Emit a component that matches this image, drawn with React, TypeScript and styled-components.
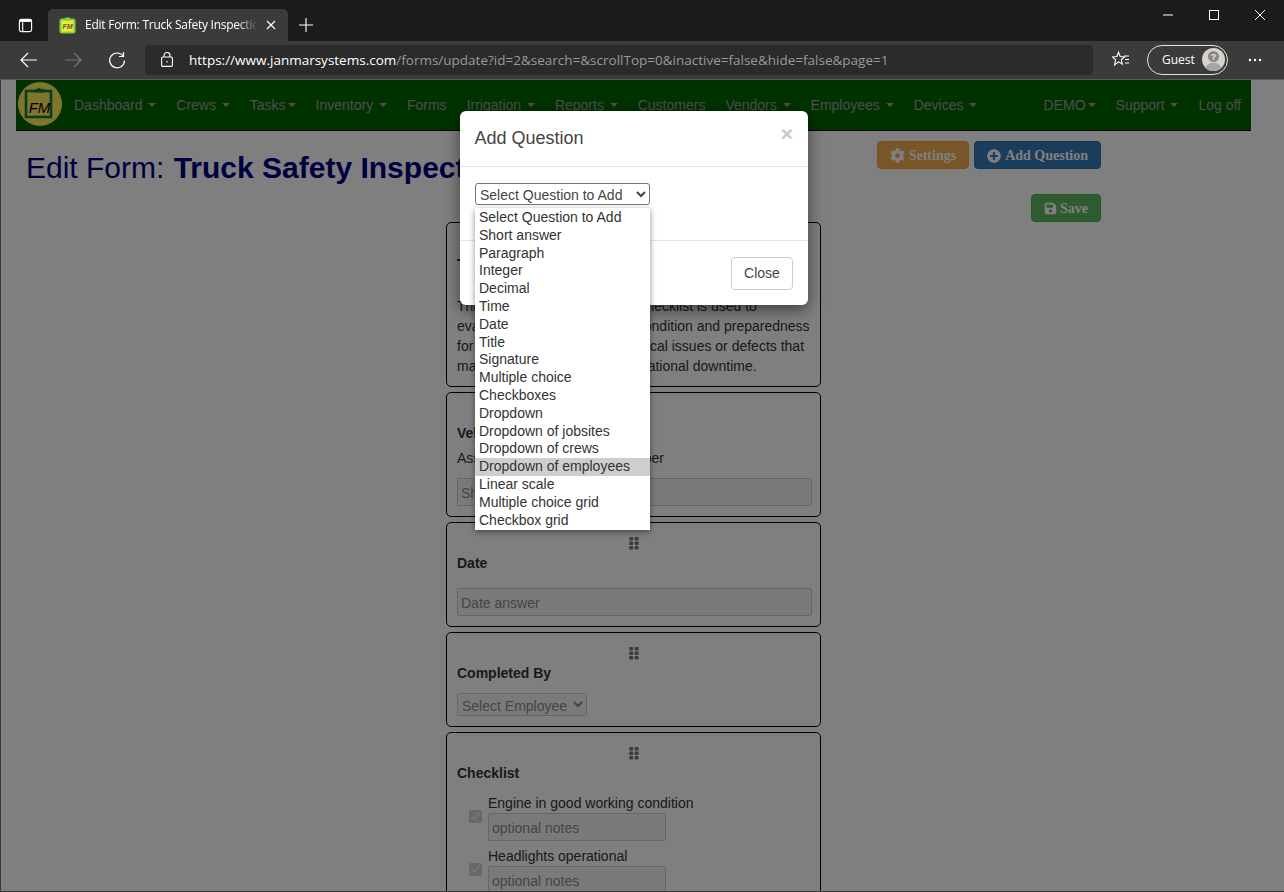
import { styled, createGlobalStyle } from 'styled-components';
import { FaCog, FaPlusCircle, FaSave } from 'react-icons/fa';

const GlobalStyle = createGlobalStyle`
  html, body {
    margin: 0;
    padding: 0;
    background: #fff;
    overflow: hidden;
  }
  * {
    box-sizing: border-box;
  }
`;

const Frame = styled.div`
  width: 1284px;
  height: 892px;
  display: flex;
  flex-direction: column;
  overflow: hidden;
  font-family: 'Liberation Sans', Arial, sans-serif;
  font-size: 14px;
  line-height: 20px;
  color: #333;
`;

/* ---------- browser chrome ---------- */

const TabStrip = styled.div`
  height: 41px;
  flex: none;
  display: flex;
  align-items: flex-end;
  background: #1b1b1b;
  color: #fff;
  font-family: 'Open Sans', 'Noto Sans', sans-serif;
`;

const StripButton = styled.div`
  width: 48px;
  height: 32px;
  padding-left: 2px;
  display: flex;
  align-items: center;
  justify-content: center;
`;

const Tab = styled.div`
  width: 240px;
  height: 32px;
  display: flex;
  align-items: center;
  padding: 0 12px 0 11px;
  background: #3b3b3b;
  border-radius: 5px 5px 0 0;
`;

const TabTitle = styled.span`
  flex: 1;
  margin: 0 8px 0 9px;
  font-size: 12px;
  letter-spacing: -0.25px;
  white-space: nowrap;
  overflow: hidden;
  -webkit-mask-image: linear-gradient(to right, #000 88%, transparent 100%);
  mask-image: linear-gradient(to right, #000 88%, transparent 100%);
`;

const NewTab = styled.div`
  width: 36px;
  height: 32px;
  display: flex;
  align-items: center;
  justify-content: center;
`;

const WindowControls = styled.div`
  margin: 0 1px 0 auto;
  align-self: flex-start;
  display: flex;
`;

const WindowButton = styled.div`
  width: 46px;
  height: 30px;
  display: flex;
  align-items: center;
  justify-content: center;
`;

const Toolbar = styled.div`
  height: 39px;
  flex: none;
  display: flex;
  align-items: center;
  padding: 0 7px 1px 7px;
  background: #3b3b3b;
  border-bottom: 1px solid #5a5a5a;
  color: #fff;
  font-family: 'Open Sans', 'Noto Sans', sans-serif;
`;

const ToolButton = styled.div`
  width: 44px;
  height: 30px;
  flex: none;
  display: flex;
  align-items: center;
  justify-content: center;
`;

const FavoritesButton = styled(ToolButton)`
  margin-left: 6px;
`;

const AddressBar = styled.div`
  width: 948px;
  height: 30px;
  flex: none;
  margin-left: 6px;
  display: flex;
  align-items: center;
  padding-left: 16px;
  background: #2b2b2b;
  border-radius: 4px;
  font-size: 13.5px;
  white-space: nowrap;
  color: #9a9a9a;
`;

const UrlStrong = styled.span`
  color: #fff;
`;

const UrlText = styled.span`
  margin-left: 16px;
`;

const GuestPill = styled.div`
  width: 81px;
  height: 30px;
  flex: none;
  margin-left: 4px;
  display: flex;
  align-items: center;
  justify-content: space-between;
  padding: 0 2px 0 14px;
  border: 1px solid #e4e4e4;
  border-radius: 15px;
  font-size: 12px;
`;

const MoreButton = styled(ToolButton)`
  width: 54px;
`;

/* ---------- page ---------- */

const Viewport = styled.div`
  flex: 1;
  min-height: 0;
  position: relative;
  overflow: hidden;
  border-left: 1px solid #3a3a3a;
  border-bottom: 1px solid #3a3a3a;
`;

const Page = styled.div`
  padding: 0 33px 0 15px;
`;

const Navbar = styled.nav`
  height: 51px;
  display: flex;
  background: #006400;
  border-bottom: 1px solid #000;
`;

const Logo = styled.div`
  width: 44px;
  height: 44px;
  margin: 2px 2px 0 2px;
  flex: none;
`;

const NavGroup = styled.div`
  display: flex;
`;

const RightGroup = styled(NavGroup)`
  margin-left: auto;
`;

const NavLink = styled.a`
  height: 50px;
  padding: 0 10px;
  display: flex;
  align-items: center;
  color: #9d9d9d;
  white-space: nowrap;
`;

const Caret = styled.span<{ $tight?: boolean }>`
  width: 0;
  height: 0;
  margin-left: ${({ $tight }) => ($tight ? '2px' : '5.8px')};
  border-top: 4px solid #9d9d9d;
  border-left: 4px solid transparent;
  border-right: 4px solid transparent;
`;

const Header = styled.div`
  display: flex;
  justify-content: space-between;
  padding: 10px 150px 0 10px;
`;

const Title = styled.h1`
  margin: 10px 0 0;
  font-size: 30px;
  font-weight: 400;
  line-height: 33px;
  color: #000080;
  white-space: nowrap;
`;

const FormName = styled.b`
  margin-left: 1px;
`;

const Actions = styled.div`
  display: flex;
  flex-direction: column;
  align-items: flex-end;
  gap: 25px;
`;

const ButtonRow = styled.div`
  display: flex;
  gap: 5px;
`;

const ActionButton = styled.button<{ $bg: string; $border: string }>`
  height: 28px;
  padding: 1px 12px 0;
  display: flex;
  align-items: center;
  gap: 4px;
  background: ${({ $bg }) => $bg};
  border: 1px solid ${({ $border }) => $border};
  border-radius: 4px;
  color: #fff;
  font-family: 'Liberation Serif', 'Times New Roman', serif;
  font-size: 14px;
  font-weight: 700;
`;

const SaveButton = styled(ActionButton)`
  gap: 3px;
`;

const CardList = styled.div`
  width: 375px;
  margin-left: 430px;
  display: flex;
  flex-direction: column;
  gap: 5px;
`;

const Card = styled.section`
  padding: 10px;
  border: 1px solid #000;
  border-radius: 5px;
`;

const Grip = styled.div`
  height: 20px;
  display: flex;
  align-items: center;
  justify-content: center;
  color: #777;
`;

const CardHeading = styled.div`
  margin-bottom: 17px;
  font-size: 18px;
  font-weight: 700;
  line-height: 26px;
`;

const Question = styled.div`
  font-weight: 700;
`;

const Hint = styled.div`
  margin-top: 5px;
`;

const Answer = styled.input<{ $top?: number }>`
  display: block;
  width: calc(100% + 2px);
  height: 28px;
  margin-top: ${({ $top }) => $top ?? 10}px;
  padding: 2px 3px 0;
  background: #f4f4f4;
  border: 1px solid #ccc;
  border-radius: 2px;
  font: inherit;
  &::placeholder {
    color: #8a8a8a;
    opacity: 1;
  }
`;

const EmployeeSelect = styled.select`
  display: block;
  width: 130px;
  height: 23px;
  margin-top: 10px;
  padding-top: 2px;
  background: #f4f4f4;
  border: 1px solid #ccc;
  border-radius: 2px;
  color: #8a8a8a;
  font: inherit;
  opacity: 1;
`;

const CheckList = styled.div`
  margin-top: 10px;
  display: flex;
  flex-direction: column;
  gap: 5px;
`;

const CheckItem = styled.div`
  display: flex;
  align-items: center;
  gap: 6px;
  padding-left: 12px;
`;

const CheckBox = styled.input`
  width: 13px;
  height: 13px;
  margin: 0 0 1px;
  flex: none;
`;

const NotesInput = styled(Answer)`
  width: 178px;
  margin-top: 0;
`;

/* ---------- modal ---------- */

const Backdrop = styled.div`
  position: absolute;
  inset: 0;
  padding: 31px 0 0 459px;
  background: rgba(0, 0, 0, 0.5);
`;

const Modal = styled.div`
  position: relative;
  width: 348px;
  background: #fff;
  border-radius: 6px;
  box-shadow: 0 5px 15px rgba(0, 0, 0, 0.5);
`;

const ModalHeader = styled.div`
  height: 56px;
  display: flex;
  align-items: center;
  justify-content: space-between;
  padding: 0 15px 2px 14.5px;
  border-bottom: 1px solid #e5e5e5;
`;

const ModalTitle = styled.h4`
  margin: 0;
  font-size: 18px;
  font-weight: 400;
  line-height: 26px;
  color: #444;
`;

const CloseX = styled.span`
  align-self: flex-start;
  margin-top: 11px;
  font-size: 21px;
  font-weight: 700;
  line-height: 24px;
  color: #c8c8c8;
`;

const ModalBody = styled.div`
  height: 74px;
  padding: 16px 15px 0;
  border-bottom: 1px solid #e5e5e5;
`;

const QuestionSelect = styled.select`
  display: block;
  width: 175px;
  height: 22px;
  padding-top: 2px;
  background: #fff;
  border: 1px solid #767676;
  border-radius: 3px;
  color: #444;
  font: inherit;
`;

const ModalFooter = styled.div`
  height: 64px;
  display: flex;
  justify-content: flex-end;
  padding: 16px 15px 0;
`;

const CloseButton = styled.button`
  width: 62px;
  height: 33px;
  padding: 0 0 2px;
  background: #fff;
  border: 1px solid #ccc;
  border-radius: 4px;
  color: #444;
  font: inherit;
`;

const OptionList = styled.ul`
  position: absolute;
  left: 15px;
  top: 97px;
  width: 175px;
  margin: 0;
  padding: 1px 0 1px;
  list-style: none;
  background: #fff;
  box-shadow: 0 2px 6px rgba(0, 0, 0, 0.45);
`;

const Option = styled.li<{ $active?: boolean }>`
  height: 17.8px;
  padding: 0 4px;
  line-height: 17px;
  color: #333;
  white-space: nowrap;
  background: ${({ $active }) => ($active ? '#cecece' : 'transparent')};
`;

const navLeft: [string, 'none' | 'spaced' | 'tight'][] = [
  ['Dashboard', 'spaced'],
  ['Crews', 'spaced'],
  ['Tasks', 'tight'],
  ['Inventory', 'spaced'],
  ['Forms', 'none'],
  ['Irrigation', 'spaced'],
  ['Reports', 'spaced'],
  ['Customers', 'none'],
  ['Vendors', 'spaced'],
  ['Employees', 'spaced'],
  ['Devices', 'spaced'],
];

const navRight: [string, 'none' | 'spaced' | 'tight'][] = [
  ['DEMO', 'tight'],
  ['Support', 'spaced'],
  ['Log off', 'none'],
];

const questionTypes = [
  'Select Question to Add',
  'Short answer',
  'Paragraph',
  'Integer',
  'Decimal',
  'Time',
  'Date',
  'Title',
  'Signature',
  'Multiple choice',
  'Checkboxes',
  'Dropdown',
  'Dropdown of jobsites',
  'Dropdown of crews',
  'Dropdown of employees',
  'Linear scale',
  'Multiple choice grid',
  'Checkbox grid',
];

function NavItem({ label, caret }: { label: string; caret: 'none' | 'spaced' | 'tight' }) {
  return (
    <NavLink>
      {label}
      {caret !== 'none' && <Caret $tight={caret === 'tight'} />}
    </NavLink>
  );
}

function GripIcon() {
  return (
    <svg width="10" height="13" viewBox="0 0 10 13" fill="currentColor">
      {[0, 4.5, 9].map((y) => (
        <g key={y}>
          <rect x="0.2" y={y} width="4" height="3.6" rx="1" />
          <rect x="5.6" y={y} width="4" height="3.6" rx="1" />
        </g>
      ))}
    </svg>
  );
}

function LogoMark() {
  return (
    <svg width="44" height="44" viewBox="0 0 44 44">
      <circle cx="22" cy="22" r="22" fill="#ffec5c" />
      <rect x="8" y="9" width="25" height="26" fill="none" stroke="#0e7a42" strokeWidth="2.6" />
      <path d="M17 9.5V7h2.5a2 2 0 0 1 3.5 0H26v3.5H17z" fill="#0e7a42" />
      <text x="21.5" y="31" textAnchor="middle" fontFamily="'Liberation Sans', sans-serif" fontStyle="italic" fontSize="15" fill="#000">
        FM
      </text>
    </svg>
  );
}

function Favicon() {
  return (
    <svg width="17" height="17" viewBox="0 0 17 17" style={{ flex: 'none' }}>
      <rect x="0.5" y="1.5" width="16" height="15" rx="2.5" fill="#7ad33a" />
      <rect x="2.5" y="3.5" width="12" height="11" fill="#f4e842" />
      <path d="M6 0.5h5v3H6z" fill="#7ad33a" />
      <text x="8.5" y="12" textAnchor="middle" fontFamily="'Liberation Sans', sans-serif" fontStyle="italic" fontWeight="700" fontSize="7" fill="#5a5a20">
        FM
      </text>
    </svg>
  );
}

export default function App() {
  return (
    <Frame>
      <GlobalStyle />
      <TabStrip>
        <StripButton>
          <svg width="15" height="15" viewBox="0 0 16 16" fill="none" stroke="#fff" strokeWidth="1.2">
            <rect x="1.5" y="1.5" width="13" height="13" rx="2" />
            <path d="M5 4.5v10" />
            <path d="M1.5 3h13" strokeWidth="2.4" />
          </svg>
        </StripButton>
        <Tab>
          <Favicon />
          <TabTitle>Edit Form: Truck Safety Inspection Checklist</TabTitle>
          <svg width="10" height="10" viewBox="0 0 10 10" stroke="#fff" strokeWidth="1.2">
            <path d="M1 1l8 8M9 1l-8 8" />
          </svg>
        </Tab>
        <NewTab>
          <svg width="14" height="14" viewBox="0 0 14 14" stroke="#fff" strokeWidth="1.1">
            <path d="M7 0v14M0 7h14" />
          </svg>
        </NewTab>
        <WindowControls>
          <WindowButton>
            <svg width="10" height="10" viewBox="0 0 10 10" stroke="#fff">
              <path d="M0 5h10" />
            </svg>
          </WindowButton>
          <WindowButton>
            <svg width="10" height="10" viewBox="0 0 10 10" stroke="#fff" fill="none">
              <rect x="0.5" y="0.5" width="9" height="9" />
            </svg>
          </WindowButton>
          <WindowButton>
            <svg width="10" height="10" viewBox="0 0 10 10" stroke="#fff">
              <path d="M0 0l10 10M10 0L0 10" />
            </svg>
          </WindowButton>
        </WindowControls>
      </TabStrip>

      <Toolbar>
        <ToolButton>
          <svg width="18" height="16" viewBox="0 0 18 16" fill="none" stroke="#fff" strokeWidth="1.2">
            <path d="M17 8H1M8 1L1 8l7 7" />
          </svg>
        </ToolButton>
        <ToolButton>
          <svg width="18" height="16" viewBox="0 0 18 16" fill="none" stroke="#777" strokeWidth="1.2">
            <path d="M1 8h16M10 1l7 7-7 7" />
          </svg>
        </ToolButton>
        <ToolButton>
          <svg width="18" height="18" viewBox="0 0 18 18" fill="none" stroke="#fff" strokeWidth="1.2">
            <path d="M15.2 5.2A7.4 7.4 0 1 0 16.5 9.5" />
            <path d="M15.5 1v4.5H11" />
          </svg>
        </ToolButton>
        <AddressBar>
          <svg width="12" height="15" viewBox="0 0 12 15" fill="none" stroke="#fff" strokeWidth="1.1">
            <rect x="0.6" y="5" width="10.8" height="9.4" rx="1.2" />
            <path d="M3 5V3.5a3 3 0 0 1 6 0V5" />
            <circle cx="6" cy="9.7" r="0.8" fill="#fff" stroke="none" />
          </svg>
          <UrlText>
            <UrlStrong>https://www.janmarsystems.com</UrlStrong>/forms/update?id=2&amp;search=&amp;scrollTop=0&amp;inactive=false&amp;hide=false&amp;page=1
          </UrlText>
        </AddressBar>
        <FavoritesButton>
          <svg width="18" height="17" viewBox="0 0 18 17" fill="none" stroke="#fff" strokeWidth="1.1">
            <path d="M6.5 1.2l1.7 4.3 4.4.4-3.3 2.9 1 4.4-3.8-2.3-3.9 3 1-5-3.1-3 4.4-.4z" />
            <path d="M12 5h5M13 8.5h4M13 12h4" />
          </svg>
        </FavoritesButton>
        <GuestPill>
          Guest
          <svg width="23" height="23" viewBox="0 0 23 23">
            <circle cx="11.5" cy="11.5" r="11.5" fill="#d6d2cd" />
            <path d="M3.5 19.8c1.5-3.6 4.5-5 8-5s6.5 1.4 8 5a11.5 11.5 0 0 1-16 0z" fill="#a7a39e" />
            <circle cx="11.5" cy="8.5" r="5.5" fill="#8b8782" />
            <text x="11.5" y="12" textAnchor="middle" fontFamily="'Liberation Sans', sans-serif" fontWeight="700" fontSize="9" fill="#e8e8e8">
              ?
            </text>
          </svg>
        </GuestPill>
        <MoreButton>
          <svg width="14" height="4" viewBox="0 0 14 4" fill="#fff">
            <circle cx="2" cy="2" r="1.2" />
            <circle cx="7" cy="2" r="1.2" />
            <circle cx="12" cy="2" r="1.2" />
          </svg>
        </MoreButton>
      </Toolbar>

      <Viewport>
        <Page>
          <Navbar>
            <Logo>
              <LogoMark />
            </Logo>
            <NavGroup>
              {navLeft.map(([label, caret]) => (
                <NavItem key={label} label={label} caret={caret} />
              ))}
            </NavGroup>
            <RightGroup>
              {navRight.map(([label, caret]) => (
                <NavItem key={label} label={label} caret={caret} />
              ))}
            </RightGroup>
          </Navbar>

          <Header>
            <Title>
              Edit Form: <FormName>Truck Safety Inspection</FormName>
            </Title>
            <Actions>
              <ButtonRow>
                <ActionButton $bg="#f0ad4e" $border="#eea236">
                  <FaCog size={15} /> Settings
                </ActionButton>
                <ActionButton $bg="#337ab7" $border="#2e6da4">
                  <FaPlusCircle size={14} /> Add Question
                </ActionButton>
              </ButtonRow>
              <SaveButton $bg="#5cb85c" $border="#4cae4c">
                <FaSave size={13} /> Save
              </SaveButton>
            </Actions>
          </Header>

          <CardList>
            <Card>
              <Grip>
                <GripIcon />
              </Grip>
              <CardHeading>Truck Safety Inspection</CardHeading>
              <div>
                This truck's safety inspection checklist is used to evaluate the overall physical condition and preparedness for road service, identifying critical issues or defects that may result in accidents or operational downtime.
              </div>
            </Card>
            <Card>
              <Grip>
                <GripIcon />
              </Grip>
              <Question>Vehicle</Question>
              <Hint>Assigned truck or vehicle number</Hint>
              <Answer disabled placeholder="Short answer" />
            </Card>
            <Card>
              <Grip>
                <GripIcon />
              </Grip>
              <Question>Date</Question>
              <Answer $top={15} disabled placeholder="Date answer" />
            </Card>
            <Card>
              <Grip>
                <GripIcon />
              </Grip>
              <Question>Completed By</Question>
              <EmployeeSelect disabled>
                <option>Select Employee</option>
              </EmployeeSelect>
            </Card>
            <Card>
              <Grip>
                <GripIcon />
              </Grip>
              <Question>Checklist</Question>
              <CheckList>
                {['Engine in good working condition', 'Headlights operational'].map((item) => (
                  <CheckItem key={item}>
                    <CheckBox type="checkbox" disabled defaultChecked />
                    <div>
                      {item}
                      <NotesInput $top={0} disabled placeholder="optional notes" />
                    </div>
                  </CheckItem>
                ))}
              </CheckList>
            </Card>
          </CardList>
        </Page>

        <Backdrop>
          <Modal>
            <ModalHeader>
              <ModalTitle>Add Question</ModalTitle>
              <CloseX>×</CloseX>
            </ModalHeader>
            <ModalBody>
              <QuestionSelect>
                <option>Select Question to Add</option>
              </QuestionSelect>
            </ModalBody>
            <ModalFooter>
              <CloseButton>Close</CloseButton>
            </ModalFooter>
            <OptionList>
              {questionTypes.map((type) => (
                <Option key={type} $active={type === 'Dropdown of employees'}>
                  {type}
                </Option>
              ))}
            </OptionList>
          </Modal>
        </Backdrop>
      </Viewport>
    </Frame>
  );
}
